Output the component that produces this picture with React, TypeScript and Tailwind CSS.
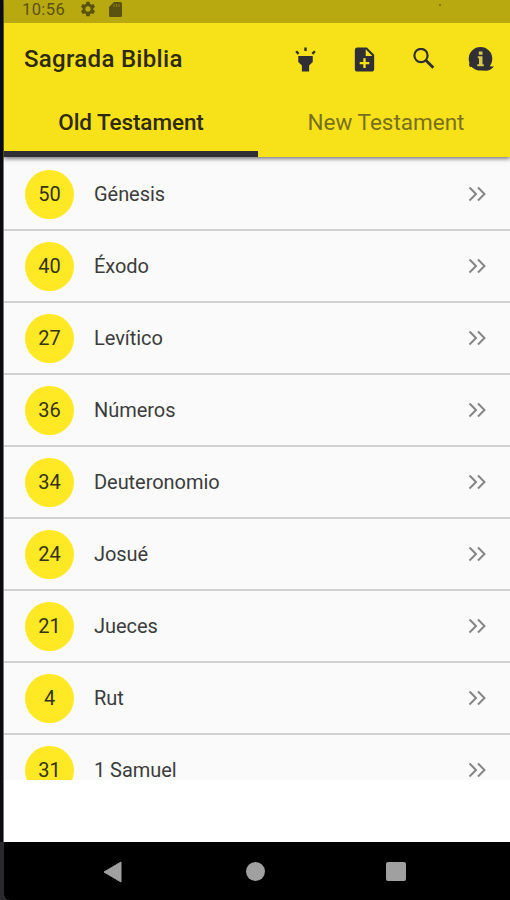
import { MdHighlight, MdNoteAdd, MdSettings } from 'react-icons/md'

const books = [
  { name: 'Génesis', chapters: 50 },
  { name: 'Éxodo', chapters: 40 },
  { name: 'Levítico', chapters: 27 },
  { name: 'Números', chapters: 36 },
  { name: 'Deuteronomio', chapters: 34 },
  { name: 'Josué', chapters: 24 },
  { name: 'Jueces', chapters: 21 },
  { name: 'Rut', chapters: 4 },
  { name: '1 Samuel', chapters: 31 },
]

const SearchIcon = () => (
  <svg className="ml-[34px] h-[22px] w-[22px] shrink-0" viewBox="0 0 22 22" fill="none" stroke="#302f35">
    <circle cx="8" cy="7.5" r="6.6" strokeWidth="2.2" />
    <path d="M12.8 12.3 20.3 19.8" strokeWidth="2.8" />
  </svg>
)

const InfoIcon = () => (
  <svg className="ml-[33px] h-[26px] w-[26px] shrink-0" viewBox="0 0 26 26">
    <circle cx="12.5" cy="12.8" r="11.8" fill="#302f35" />
    <path d="M14 24.3c5 1.2 10-.2 12-4.3-1.5.8-3.5.8-5-.2z" fill="#302f35" />
    <path d="M.8 17.5h3v3.5H1.8z" fill="#302f35" />
    <path d="M9.8 10.3h4.700v8h1.300v1.900H9.300v-1.900h1.700v-6.100H9.800zM10.800 5.500h3.700v3.200h-3.700z" fill="#d9c94a" />
  </svg>
)

const Chevrons = () => (
  <svg className="h-4 w-[18px]" viewBox="0 0 18 16" fill="none" stroke="#858585" strokeWidth="2">
    <path d="M1.5 1.5 8 8l-6.5 6.5M10 1.5 16.5 8 10 14.5" />
  </svg>
)

const App = () => {
  return (
    <div className="flex h-[900px] w-[510px] overflow-hidden bg-[#101014] font-['Roboto',sans-serif]">
      {/* Device edge */}
      <div className="flex w-1 shrink-0 flex-col">
        <div className="h-[158px] border-r border-[#6d6718] bg-[#0b0b20]" />
        <div className="h-[684px] border-r border-[#77777a] bg-[#0c0c0e]" />
        <div className="flex-1 bg-[#29292b]" />
      </div>

      <div className="flex min-w-0 flex-1 flex-col bg-[#29292b]">
        <header className="relative z-10 flex h-[157px] shrink-0 flex-col bg-[#f7e21a] shadow-[0_2px_4px_rgba(0,0,0,0.5)]">
          {/* Status bar */}
          <div className="flex h-[23px] shrink-0 items-start bg-[#b9a911] pl-[18px] text-[#5a520e]">
            <span className="w-[43px] text-[16.5px] leading-[20px] tracking-[0.4px]">10:56</span>
            <MdSettings className="ml-[14px] h-[18px] w-[18px]" />
            <svg className="ml-[12px] mt-[2px] h-[15px] w-[13px]" viewBox="0 0 13 15" fill="currentColor">
              <path d="M5 0h6.5A1.5 1.5 0 0 1 13 1.5v12a1.5 1.5 0 0 1-1.5 1.5h-10A1.5 1.5 0 0 1 0 13.5V5z" />
              <path d="M5 2v3M7.5 2v3M10 2v3" stroke="#8b7f10" strokeWidth="1" />
            </svg>
            <span className="ml-[317px] mt-1 h-[2px] w-[2px] rounded-full bg-[#776e12]" />
          </div>

          {/* App bar */}
          <div className="flex h-[72px] items-center pl-5 text-[#302f35]">
            <h1 className="w-[267px] text-[24px] font-medium tracking-[0.3px] text-[#2d2a10]">Sagrada Biblia</h1>
            <MdHighlight className="h-[29px] w-[29px]" />
            <MdNoteAdd className="ml-[30px] h-[29px] w-[29px]" />
            <SearchIcon />
            <InfoIcon />
          </div>

          {/* Tabs */}
          <div className="flex flex-1 text-[22.5px] leading-[50px]">
            <button className="h-[62px] w-[254px] border-b-[6px] border-[#302f35] pb-0.5 font-medium tracking-[-0.08px] text-[#2d2a10]">
              Old Testament
            </button>
            <button className="h-[62px] flex-1 border-b-[6px] border-transparent pb-0.5 pl-1 text-[#77701d]">
              New Testament
            </button>
          </div>
        </header>

        {/* Books */}
        <main className="h-[623px] shrink-0 overflow-hidden bg-[#fafafa] pt-[2px]">
          {books.map((book) => (
            <div
              key={book.name}
              className="flex h-[72px] items-center border-b-2 border-[#d0d0d0] pl-[21px] pr-6 text-[20px] leading-[18px]"
            >
              <div className="flex h-[49px] w-[49px] items-center justify-center rounded-full bg-[#ffe924] text-[#35320f]">
                {book.chapters}
              </div>
              <span className="ml-5 flex-1 tracking-[-0.05px] text-[#3c3c3c]">{book.name}</span>
              <Chevrons />
            </div>
          ))}
        </main>

        <div className="h-[62px] shrink-0 bg-white" />

        {/* Navigation bar */}
        <nav className="flex h-[58px] shrink-0 items-center rounded-bl-md bg-black pl-[99px] pt-[1px] text-[#a0a0a0]">
          <svg className="h-[22px] w-5" viewBox="0 0 20 22" fill="currentColor">
            <path d="M18 1v20L1 11z" stroke="currentColor" strokeLinejoin="round" />
          </svg>
          <div className="ml-[123px] h-[19px] w-[19px] rounded-full bg-[#a0a0a0]" />
          <div className="ml-[121px] h-[19px] w-5 rounded-[2px] bg-[#a0a0a0]" />
        </nav>
      </div>
    </div>
  )
}

export default App
